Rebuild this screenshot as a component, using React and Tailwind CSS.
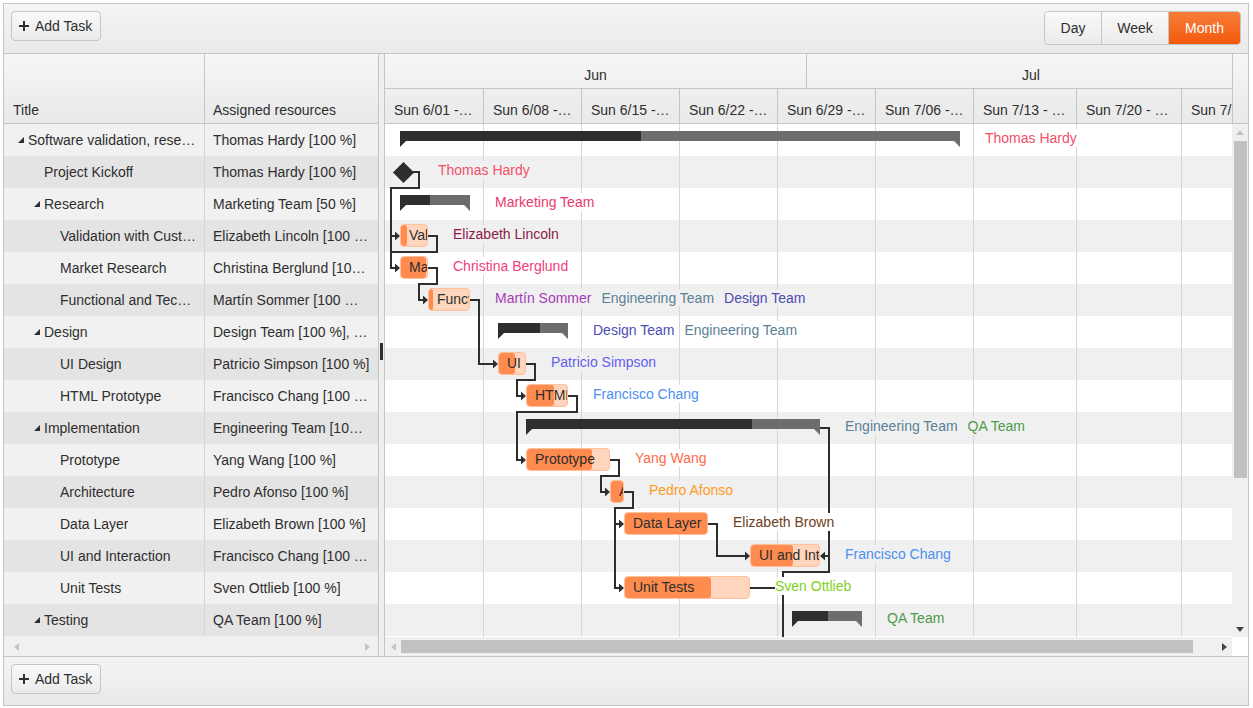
import React from "react";

const FONT = "font-['Liberation_Sans',Arial,sans-serif]";

const rows = [
  { title: "Software validation, research and implementation", res: "Thomas Hardy [100 %]", pad: "pl-[14px]", parent: true },
  { title: "Project Kickoff", res: "Thomas Hardy [100 %]", pad: "pl-[40px]" },
  { title: "Research", res: "Marketing Team [50 %]", pad: "pl-[30px]", parent: true },
  { title: "Validation with Customers", res: "Elizabeth Lincoln [100 %]", pad: "pl-[56px]" },
  { title: "Market Research", res: "Christina Berglund [100 %]", pad: "pl-[56px]" },
  { title: "Functional and Technical Specification", res: "Martín Sommer [100 %], Engineering Team [100 %], Design Team [100 %]", pad: "pl-[56px]" },
  { title: "Design", res: "Design Team [100 %], Engineering Team [100 %]", pad: "pl-[30px]", parent: true },
  { title: "UI Design", res: "Patricio Simpson [100 %]", pad: "pl-[56px]" },
  { title: "HTML Prototype", res: "Francisco Chang [100 %]", pad: "pl-[56px]" },
  { title: "Implementation", res: "Engineering Team [100 %], QA Team [100 %]", pad: "pl-[30px]", parent: true },
  { title: "Prototype", res: "Yang Wang [100 %]", pad: "pl-[56px]" },
  { title: "Architecture", res: "Pedro Afonso [100 %]", pad: "pl-[56px]" },
  { title: "Data Layer", res: "Elizabeth Brown [100 %]", pad: "pl-[56px]" },
  { title: "UI and Interaction", res: "Francisco Chang [100 %]", pad: "pl-[56px]" },
  { title: "Unit Tests", res: "Sven Ottlieb [100 %]", pad: "pl-[56px]" },
  { title: "Testing", res: "QA Team [100 %]", pad: "pl-[30px]", parent: true },
];

const weekCls = ["w-[99px]", "w-[98px]", "w-[98px]", "w-[98px]", "w-[98px]", "w-[98px]", "w-[103px]", "w-[105px]", "w-[120px]"];
const weekLabels = [
  "Sun 6/01 - Sat 6/07",
  "Sun 6/08 - Sat 6/14",
  "Sun 6/15 - Sat 6/21",
  "Sun 6/22 - Sat 6/28",
  "Sun 6/29 - Sat 7/05",
  "Sun 7/06 - Sat 7/12",
  "Sun 7/13 - Sat 7/19",
  "Sun 7/20 - Sat 7/26",
  "Sun 7/27 - Sat 8/02",
];

const C = {
  thomas: "#f2506a",
  marketing: "#ea3a6c",
  lincoln: "#8c1a48",
  christina: "#f0407c",
  martin: "#a63cb8",
  eng: "#5b8196",
  design: "#4b4db3",
  patricio: "#5f5ff0",
  francisco: "#4c8ff0",
  qa: "#4b9b48",
  yang: "#ff6a4a",
  pedro: "#ff9a1e",
  brown: "#6e4020",
  sven: "#7ed321",
};

const OX = 385;
const OY = 124;

const tasks = [
  { type: "summary", row: 0, x1: 400, x2: 960, p: 641, labels: [["Thomas Hardy", C.thomas]] },
  { type: "milestone", row: 1, x1: 393, x2: 413, labels: [["Thomas Hardy", C.thomas]] },
  { type: "summary", row: 2, x1: 400, x2: 470, p: 430, labels: [["Marketing Team", C.marketing]] },
  { type: "task", row: 3, x1: 400, x2: 428, p: 407, text: "Validation with Customers", labels: [["Elizabeth Lincoln", C.lincoln]] },
  { type: "task", row: 4, x1: 400, x2: 428, p: 426, text: "Market Research", labels: [["Christina Berglund", C.christina]] },
  { type: "task", row: 5, x1: 428, x2: 470, p: 433, text: "Functional and Technical Specification", labels: [["Martín Sommer", C.martin], ["Engineering Team", C.eng], ["Design Team", C.design]] },
  { type: "summary", row: 6, x1: 498, x2: 568, p: 540, labels: [["Design Team", C.design], ["Engineering Team", C.eng]] },
  { type: "task", row: 7, x1: 498, x2: 526, p: 515, text: "UI Design", labels: [["Patricio Simpson", C.patricio]] },
  { type: "task", row: 8, x1: 526, x2: 568, p: 554, text: "HTML Prototype", labels: [["Francisco Chang", C.francisco]] },
  { type: "summary", row: 9, x1: 526, x2: 820, p: 752, labels: [["Engineering Team", C.eng], ["QA Team", C.qa]] },
  { type: "task", row: 10, x1: 526, x2: 610, p: 592, text: "Prototype", labels: [["Yang Wang", C.yang]] },
  { type: "task", row: 11, x1: 610, x2: 624, p: 623, text: "Architecture", labels: [["Pedro Afonso", C.pedro]] },
  { type: "task", row: 12, x1: 624, x2: 708, p: 708, text: "Data Layer", labels: [["Elizabeth Brown", C.brown]] },
  { type: "task", row: 13, x1: 750, x2: 820, p: 793, text: "UI and Interaction", labels: [["Francisco Chang", C.francisco]] },
  { type: "task", row: 14, x1: 624, x2: 750, p: 711, text: "Unit Tests", labels: [["Sven Ottlieb", C.sven]] },
  { type: "summary", row: 15, x1: 792, x2: 862, p: 828, labels: [["QA Team", C.qa]] },
];

const depPaths = [
  "M413 172 H419 V188 H391 V236 H396",
  "M391 236 V268 H396",
  "M428 236 H437 V252 H391",
  "M428 268 H437 V284 H419 V300 H424",
  "M470 300 H479 V364 H494",
  "M526 364 H535 V380 H517 V396 H522",
  "M568 396 H577 V412 H517 V460 H522",
  "M610 460 H619 V476 H601 V492 H606",
  "M624 492 H633 V508 H615 V524 H620",
  "M615 524 V588 H620",
  "M708 524 H717 V556 H746",
  "M820 428 H829 V572 H783 V645",
  "M829 556 H824",
  "M750 588 H783",
];
const arrowsRight = [
  [400, 236], [400, 268], [428, 300], [498, 364], [526, 396], [526, 460], [610, 492], [624, 524], [624, 588], [750, 556],
];
const arrowsLeft = [[820, 556]];

function PlusIcon() {
  return (
    <svg width="10" height="10" viewBox="0 0 10 10" className="shrink-0">
      <path d="M5 0V10M0 5H10" stroke="#2e2e2e" strokeWidth="2" />
    </svg>
  );
}

function AddTask() {
  return (
    <button className="h-[30px] flex items-center gap-[6px] pl-[7px] pr-[8px] rounded-[4px] border border-[#c5c5c5] bg-linear-to-b from-[#f9f9f9] to-[#ebebeb] text-[14px] leading-5 text-[#2e2e2e]">
      <PlusIcon />
      <span>Add Task</span>
    </button>
  );
}

function ViewSwitch() {
  return (
    <div className="h-[34px] flex rounded-[4px] border border-[#c5c5c5] overflow-hidden text-[14px] leading-5">
      <div className="w-[57px] flex items-center justify-center border-r border-[#c5c5c5] bg-linear-to-b from-[#f9f9f9] to-[#ebebeb] text-[#2e2e2e]">Day</div>
      <div className="w-[67px] flex items-center justify-center border-r border-[#c5c5c5] bg-linear-to-b from-[#f9f9f9] to-[#ebebeb] text-[#2e2e2e]">Week</div>
      <div className="w-[71px] flex items-center justify-center bg-linear-to-b from-[#f67d37] to-[#f25804] text-white">Month</div>
    </div>
  );
}

function Tri({ dir, color }) {
  const pts = {
    left: "5,0 5,8 0,4",
    right: "0,0 0,8 5,4",
    up: "0,5 8,5 4,0",
    down: "0,0 8,0 4,5",
  }[dir];
  const w = dir === "left" || dir === "right" ? 5 : 8;
  const h = dir === "left" || dir === "right" ? 8 : 5;
  return (
    <svg width={w} height={h} viewBox={`0 0 ${w} ${h}`} className="shrink-0">
      <polygon points={pts} fill={color} />
    </svg>
  );
}

function ExpandIcon() {
  return (
    <svg width="6" height="6" viewBox="0 0 6 6" className="shrink-0 mr-[4px]">
      <polygon points="6,0 6,6 0,6" fill="#2e2e2e" />
    </svg>
  );
}

function GridPane() {
  return (
    <div className="w-[374px] shrink-0 flex flex-col">
      <div className="h-[70px] shrink-0 flex border-b border-[#c5c5c5] bg-linear-to-b from-[#f6f6f6] to-[#e9e9e9]">
        <div className="w-[201px] shrink-0 border-r border-[#c5c5c5] flex items-end pl-[9px] pb-[3px] leading-5">Title</div>
        <div className="flex-1 flex items-end pl-[8px] pb-[3px] leading-5">Assigned resources</div>
      </div>
      <div className="h-[513px] shrink-0 overflow-hidden bg-[#f0f0f0]">
        {rows.map((r, i) => (
          <div key={i} className={`h-[32px] flex ${i % 2 ? "bg-[#e4e4e4]" : "bg-[#f1f1f1]"}`}>
            <div className={`w-[201px] shrink-0 border-r border-[#d5d5d5] flex items-center pr-[8px] min-w-0 ${r.pad}`}>
              {r.parent && <ExpandIcon />}
              <span className="truncate leading-5">{r.title}</span>
            </div>
            <div className="flex-1 min-w-0 flex items-center pl-[8px] pr-[8px]">
              <span className="truncate leading-5">{r.res}</span>
            </div>
          </div>
        ))}
      </div>
      <div className="h-[19px] shrink-0 bg-[#f0f0f0] flex items-center justify-between pl-[10px] pr-[8px]">
        <Tri dir="left" color="#c4c4c4" />
        <Tri dir="right" color="#c4c4c4" />
      </div>
    </div>
  );
}

function Splitter() {
  return (
    <div className="w-[7px] shrink-0 border-x border-[#c5c5c5] bg-[#efefef] flex flex-col items-center pt-[289px]">
      <div className="w-[3px] h-[17px] bg-[#2e2e2e]" />
    </div>
  );
}

function SummaryBar({ t }) {
  const top = t.row * 32 + 7;
  const w = t.x2 - t.x1;
  const pw = t.p - t.x1;
  return (
    <div className="absolute" style={{ left: t.x1 - OX, top, width: w, height: 16 }}>
      <div className="flex h-[10px]">
        <div className="h-full bg-[#2e2e2e]" style={{ width: pw }} />
        <div className="h-full flex-1 bg-[#6d6d6d]" />
      </div>
      <div className="flex justify-between">
        <svg width="6" height="6" viewBox="0 0 6 6"><polygon points="0,0 6,0 0,6" fill="#2e2e2e" /></svg>
        <svg width="6" height="6" viewBox="0 0 6 6"><polygon points="0,0 6,0 6,6" fill={t.p >= t.x2 ? "#2e2e2e" : "#6d6d6d"} /></svg>
      </div>
    </div>
  );
}

function TaskBar({ t }) {
  const top = t.row * 32 + 4;
  return (
    <div
      className="absolute rounded-[4px] border border-[#ffbf99] bg-[#ffd6bd] overflow-hidden"
      style={{ left: t.x1 - OX, top, width: t.x2 - t.x1, height: 23 }}
    >
      <div className="absolute left-0 top-0 bottom-0 rounded-[3px] bg-[#ff8b4e]" style={{ width: t.p - t.x1 - 1 }} />
      <div className="relative pl-[8px] whitespace-nowrap leading-[21px] text-[#2e2e2e]">{t.text}</div>
    </div>
  );
}

function TimelineBody() {
  return (
    <div className="w-[847px] h-[513px] shrink-0 relative overflow-hidden">
      {Array.from({ length: 17 }).map((_, i) => (
        <div key={i} className={`h-[32px] flex ${i % 2 ? "bg-[#f0f0f0]" : "bg-white"}`}>
          {weekCls.map((c, j) => (
            <div key={j} className={`${c} shrink-0 h-full border-r border-[#d6d6d6]`} />
          ))}
        </div>
      ))}
      <svg className="absolute left-0 top-0" width="847" height="513" viewBox="0 0 847 513">
        <g transform={`translate(${-OX} ${-OY})`}>
          {depPaths.map((d, i) => (
            <path key={i} d={d} fill="none" stroke="#2e2e2e" strokeWidth="2" />
          ))}
          {arrowsRight.map(([x, y], i) => (
            <polygon key={"r" + i} points={`${x - 5},${y - 4.5} ${x},${y} ${x - 5},${y + 4.5}`} fill="#2e2e2e" />
          ))}
          {arrowsLeft.map(([x, y], i) => (
            <polygon key={"l" + i} points={`${x + 5},${y - 4.5} ${x},${y} ${x + 5},${y + 4.5}`} fill="#2e2e2e" />
          ))}
        </g>
      </svg>
      {tasks.map((t, i) => {
        if (t.type === "summary") return <SummaryBar key={i} t={t} />;
        if (t.type === "task") return <TaskBar key={i} t={t} />;
        return (
          <div
            key={i}
            className="absolute w-[15px] h-[15px] rotate-45 bg-[#2e2e2e]"
            style={{ left: 403 - 7.5 - OX, top: t.row * 32 + 16 - 7.5 }}
          />
        );
      })}
      {tasks.map((t, i) => (
        <div
          key={"lab" + i}
          className="absolute flex gap-[10px] whitespace-nowrap"
          style={{ left: t.x2 + 25 - OX, top: t.row * 32 + 5 }}
        >
          {t.labels.map(([name, color], k) => (
            <span key={k} className={`leading-[18px] ${t.row % 2 ? "bg-[#f0f0f0]" : "bg-white"}`} style={{ color }}>
              {name}
            </span>
          ))}
        </div>
      ))}
    </div>
  );
}

function TimelinePane() {
  return (
    <div className="w-[863px] shrink-0 flex flex-col">
      <div className="h-[70px] shrink-0 flex">
        <div className="w-[847px] shrink-0 overflow-hidden border-b border-[#c5c5c5] bg-linear-to-b from-[#f6f6f6] to-[#e9e9e9]">
          <div className="h-[35px] flex border-b border-[#c5c5c5]">
            <div className="w-[422px] shrink-0 border-r border-[#c5c5c5] text-center pt-[11px] leading-5">Jun</div>
            <div className="w-[448px] shrink-0 text-center pt-[11px] leading-5">Jul</div>
          </div>
          <div className="h-[34px] flex">
            {weekCls.map((c, j) => (
              <div key={j} className={`${c} shrink-0 border-r border-[#c5c5c5] pl-[9px] pr-[9px] pt-[11px] leading-5 truncate`}>
                {weekLabels[j]}
              </div>
            ))}
          </div>
        </div>
        <div className="w-[16px] shrink-0 border-l border-b border-[#c5c5c5] bg-linear-to-b from-[#f6f6f6] to-[#e9e9e9]" />
      </div>
      <div className="h-[513px] shrink-0 flex">
        <TimelineBody />
        <div className="w-[16px] shrink-0 bg-[#f0f0f0] flex flex-col">
          <div className="h-[16px] flex items-center justify-center">
            <Tri dir="up" color="#c4c4c4" />
          </div>
          <div className="ml-[2px] mt-[1px] w-[13px] h-[337px] bg-[#c1c1c1]" />
          <div className="flex-1" />
          <div className="h-[16px] flex items-center justify-center">
            <Tri dir="down" color="#444444" />
          </div>
        </div>
      </div>
      <div className="h-[19px] shrink-0 flex">
        <div className="w-[847px] shrink-0 bg-[#f0f0f0] flex items-center">
          <div className="w-[16px] h-full flex items-center justify-center">
            <Tri dir="left" color="#c4c4c4" />
          </div>
          <div className="w-[792px] h-[13px] bg-[#c1c1c1]" />
          <div className="flex-1" />
          <div className="w-[16px] h-full flex items-center justify-center">
            <Tri dir="right" color="#444444" />
          </div>
        </div>
        <div className="w-[16px] shrink-0 bg-white" />
      </div>
    </div>
  );
}

export default function App() {
  return (
    <div className={`${FONT} w-[1253px] h-[708px] bg-white pl-[3px] pt-[3px] text-[14px] text-[#2e2e2e]`}>
      <div className="w-[1246px] h-[703px] border border-[#c5c5c5] flex flex-col overflow-hidden">
        <div className="h-[50px] shrink-0 border-b border-[#c5c5c5] bg-linear-to-b from-[#f4f4f4] to-[#eaeaea] flex justify-between items-start px-[7px] pt-[7px]">
          <AddTask />
          <ViewSwitch />
        </div>
        <div className="h-[602px] shrink-0 flex">
          <GridPane />
          <Splitter />
          <TimelinePane />
        </div>
        <div className="flex-1 border-t border-[#c5c5c5] bg-linear-to-b from-[#f4f4f4] to-[#e9e9e9] px-[7px] pt-[7px]">
          <AddTask />
        </div>
      </div>
    </div>
  );
}
